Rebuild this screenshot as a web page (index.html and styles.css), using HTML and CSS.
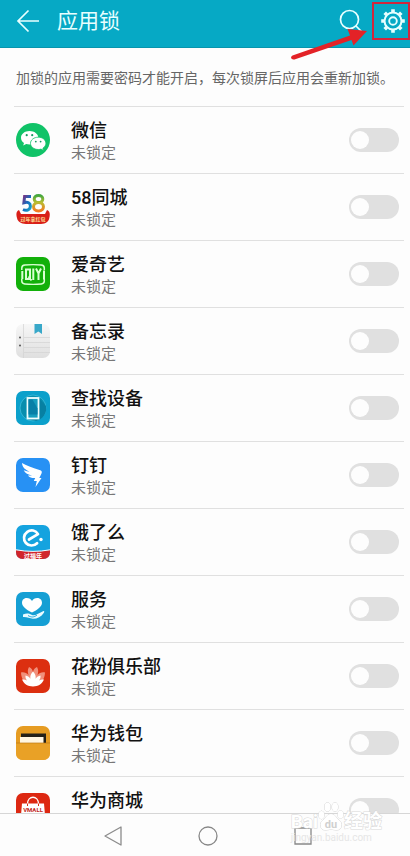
FILE: index.html
```html
<!DOCTYPE html>
<html lang="zh-CN">
<head>
  <meta charset="UTF-8" />
  <meta name="viewport" content="width=device-width, initial-scale=1.0"/>
  <title>应用锁</title>
  <link rel="stylesheet" href="styles.css">
</head>
<body>
  <header class="topbar">
    <button class="icon-btn" aria-label="返回">
      <svg width="24" height="24" viewBox="0 0 24 24" fill="none" stroke="#e8ffff" stroke-width="1.7">
        <path d="M23 12H2M12.500 1.500L2 12l10.500 10.500"/>
      </svg>
    </button>
    <h1>应用锁</h1>
    <button class="icon-btn" aria-label="搜索">
      <svg width="24" height="24" viewBox="0 0 24 24" fill="none" stroke="#e8ffff" stroke-width="1.7">
        <circle cx="10.500" cy="10.500" r="9"/>
        <path d="M17 17l6 6"/>
      </svg>
    </button>
    <button class="icon-btn settings" aria-label="设置">
      <svg width="24" height="24" viewBox="0 0 24 24" fill="none" stroke="#e8ffff">
        <circle cx="12" cy="12" r="8.500" stroke-width="2"/>
        <circle cx="12" cy="12" r="3.800" stroke-width="1.900"/>
        <path stroke-width="3.600" d="M12 .2v3M12 20.800v3M.2 12h3M20.800 12h3M3.700 3.700l2 2M18.300 18.300l2 2M3.700 20.300l2-2M18.300 5.700l2-2"/>
      </svg>
    </button>
  </header>

  <main class="content">
    <p class="hint">加锁的应用需要密码才能开启，每次锁屏后应用会重新加锁。</p>

    <ul class="app-list">
      <li>
        <label class="app-row">
          <svg class="app-icon" viewBox="0 0 34 34">
            <circle cx="17" cy="17" r="17" fill="#10c368"/>
            <path fill="#fff" d="M13.500 8C8.800 8 5 10.900 5 14.700c0 2.100 1.100 3.900 3 5.200l-.8 2.600 3-1.500c1.100.3 2.200.4 3.300.4 4.900 0 8.800-2.900 8.800-6.700S18.300 8 13.500 8z"/>
            <path fill="#fff" stroke="#10c368" stroke-width=".8" d="M22.300 14.200c-4.400 0-7.800 2.700-7.800 6.100s3.400 6.200 7.800 6.200c1 0 1.900-.1 2.700-.4l2.600 1.300-.7-2.200c1.900-1.200 3-2.900 3-4.900 0-3.400-3.300-6.100-7.600-6.100z"/>
            <g fill="#159b60"><circle cx="10.700" cy="12.200" r="1.100"/><circle cx="16.200" cy="12.200" r="1.100"/><circle cx="19.800" cy="18.600" r=".9"/><circle cx="24.600" cy="18.600" r=".9"/></g>
          </svg>
          <span class="app-text"><span class="name">微信</span><span class="state">未锁定</span></span>
          <input type="checkbox" class="switch">
        </label>
      </li>
      <li>
        <label class="app-row">
          <svg class="app-icon" viewBox="0 0 34 34">
            <defs>
              <linearGradient id="eight" x1="0" y1="0" x2="0" y2="1">
                <stop offset="0" stop-color="#45a83f"/><stop offset=".45" stop-color="#b8bd32"/><stop offset="1" stop-color="#f47b22"/>
              </linearGradient>
              <linearGradient id="five" x1="0" y1="0" x2="1" y2="1">
                <stop offset="0" stop-color="#7a3383"/><stop offset=".5" stop-color="#156cc0"/><stop offset="1" stop-color="#19a7c7"/>
              </linearGradient>
            </defs>
            <path fill="#d91f18" d="M3 20C0 21 0 25 1 28c.8 4 4 5.500 9 6h15c5-.5 7.500-2 8.300-6 .9-4 .7-7-2.300-8l-2 4H5z"/>
            <path fill="none" stroke="url(#five)" stroke-width="3" d="M15 6.500H8.600l-.7 6.200c3.800-1.200 6.500.2 6.500 3.300 0 3.800-3.700 5.200-7.400 3.500"/>
            <path fill="none" stroke="url(#eight)" stroke-width="3" d="M22.500 5.500c5.700 0 5.700 7 0 7s-5.700-7 0-7zM22.500 12.500c6.600 0 6.600 8.500 0 8.500s-6.600-8.500 0-8.500z"/>
            <text x="17" y="31" class="mark mark-gold">过年拿红包</text>
          </svg>
          <span class="app-text"><span class="name">58同城</span><span class="state">未锁定</span></span>
          <input type="checkbox" class="switch">
        </label>
      </li>
      <li>
        <label class="app-row">
          <svg class="app-icon" viewBox="0 0 34 34">
            <rect width="34" height="34" rx="7" fill="#12b00a"/>
            <path fill="none" stroke="#d9ffd2" stroke-width="1.500" d="M5.800 13V11c0-2 1-2.800 3-3 5.500-.5 11-.5 16.500 0 2 .2 3 1 3 3v2M5.800 22v2c0 2 1 2.800 3 3 5.500.5 11 .5 16.500 0 2-.2 3-1 3-3v-2"/>
            <path fill="none" stroke="#d9ffd2" stroke-width="2" d="M6.300 14v8M10 12.500h4v9.500h-4zM12.500 19.500l3 4M17.300 11.500V23M20 11.500l2.500 5 2.500-5M22.500 16v7M28 13.500v9"/>
          </svg>
          <span class="app-text"><span class="name">爱奇艺</span><span class="state">未锁定</span></span>
          <input type="checkbox" class="switch">
        </label>
      </li>
      <li>
        <label class="app-row">
          <svg class="app-icon" viewBox="0 0 34 34">
            <defs>
              <linearGradient id="paper" x1="0" y1="0" x2="0" y2="1">
                <stop offset="0" stop-color="#f7f7f7"/><stop offset="1" stop-color="#dfdfdf"/>
              </linearGradient>
            </defs>
            <rect width="34" height="34" rx="7" fill="url(#paper)"/>
            <path stroke="#d3d3d3" stroke-width=".7" d="M7.500 0v34M8 13.500h26M8 18.500h26M8 23.500h26M8 28.500h26"/>
            <path fill="#38a8c9" d="M18.500 0H26v10l-3.700-2.500L18.500 10z"/>
            <circle cx="4" cy="13.500" r=".9" fill="#444"/><circle cx="4" cy="21.500" r=".9" fill="#444"/>
          </svg>
          <span class="app-text"><span class="name">备忘录</span><span class="state">未锁定</span></span>
          <input type="checkbox" class="switch">
        </label>
      </li>
      <li>
        <label class="app-row">
          <svg class="app-icon" viewBox="0 0 34 34">
            <rect width="34" height="34" rx="7" fill="#0ba0cb"/>
            <circle cx="17" cy="17" r="13" fill="#088eae" stroke="#3fbcdc" stroke-width=".8"/>
            <path fill="#0780a2" d="M23 7l7 8a13 13 0 01-10 15l-9-3z"/>
            <rect x="11.500" y="7" width="11" height="20.500" fill="#169dbe" stroke="#f2ffff" stroke-width="1.800"/>
            <path fill="#087fa7" d="M12.500 8.500h4l5 9v6h-9z"/>
          </svg>
          <span class="app-text"><span class="name">查找设备</span><span class="state">未锁定</span></span>
          <input type="checkbox" class="switch">
        </label>
      </li>
      <li>
        <label class="app-row">
          <svg class="app-icon" viewBox="0 0 34 34">
            <rect width="34" height="34" rx="7" fill="#2791f4"/>
            <path fill="#fff" d="M6 5c4 2.500 10 4.700 17.500 7 2.200.7 2.800 1.700 2 3.600L23.300 20h2.200L19.500 29l1.300-6h-3l1.400-3c-3 .2-5.500-.5-7.300-2.500 1.800.2 3.300.1 4.300-.1-4-.6-7.200-2.300-8.500-5.100 2.200.9 4.300 1.300 6 1.300C9.600 12 6.200 9.500 6 5z"/>
          </svg>
          <span class="app-text"><span class="name">钉钉</span><span class="state">未锁定</span></span>
          <input type="checkbox" class="switch">
        </label>
      </li>
      <li>
        <label class="app-row">
          <svg class="app-icon" viewBox="0 0 34 34">
            <rect width="34" height="34" rx="7" fill="#15a3df"/>
            <path fill="#d1252b" d="M0 25q17 3.200 34 0v2q0 7-7 7H7q-7 0-7-7z"/>
            <path fill="none" stroke="#fff" stroke-width="1" d="M0 24.800q17 3.200 34 0"/>
            <path fill="none" stroke="#fff" stroke-width="2.700" stroke-linecap="round" stroke-linejoin="round" d="M13 14.500l9-5.300c-2.200-4.100-7.100-5-10.700-2.400-3.900 2.800-4.300 8-1.400 11.200 2.900 3.300 8 3.300 11.200.2"/>
            <circle cx="25" cy="14.500" r="1.700" fill="#fff"/>
            <text x="17" y="32.500" class="mark">过福年</text>
          </svg>
          <span class="app-text"><span class="name">饿了么</span><span class="state">未锁定</span></span>
          <input type="checkbox" class="switch">
        </label>
      </li>
      <li>
        <label class="app-row">
          <svg class="app-icon" viewBox="0 0 34 34">
            <rect width="34" height="34" rx="7" fill="#159fd4"/>
            <path fill="#fff" d="M16 20.500C10.500 18 6 14.500 6 10.800 6 7.500 8.300 6 10.800 6c2.300 0 4.200 1 5.200 3 1-2 2.900-3 5.200-3C23.700 6 26 7.500 26 10.800c0 3.700-4.500 7.200-10 9.700z"/>
            <path fill="#e9fbff" d="M7 22.500c3.500-1.800 6-1.200 8.500.2 2 .9 4 .5 5.500-.5l6-3c1.300-.5 1.700.4.9 1.500-2.700 4-6.400 6-10.900 6-3.500-.3-6-2-10-1.700z"/>
            <path fill="none" stroke="#159fd4" stroke-width=".9" d="M12 23.500c3 2 6 2 9-.5"/>
          </svg>
          <span class="app-text"><span class="name">服务</span><span class="state">未锁定</span></span>
          <input type="checkbox" class="switch">
        </label>
      </li>
      <li>
        <label class="app-row">
          <svg class="app-icon" viewBox="0 0 34 34">
            <rect width="34" height="34" rx="7" fill="#dc2f10"/>
            <path fill="#f0907c" d="M13 8c2.500 1 4 3 4 6 0-3 1.500-5 4-6 1.500 2.500 1.500 5 .5 8 2-2.300 4.500-3 7.500-2.500-.2 7-4 12-12 12.500-8-.5-11.800-5.500-12-12.500 3-.5 5.500.2 7.500 2.500-1-3-1-5.500.5-8z"/>
            <path fill="#fff" d="M17 12.500c2.300 2.200 3 4.700 2.600 7.200 1.200-1.800 2.900-2.800 4.900-3.200.2 2-.3 3.500-1.500 5 1.600-.9 3.200-1.200 5-.9-2 4.500-5.700 6.900-11 6.900s-9-2.400-11-6.900c1.800-.3 3.400 0 5 .9-1.200-1.500-1.700-3-1.500-5 2 .4 3.700 1.400 4.900 3.200-.4-2.500.3-5 2.600-7.200z"/>
          </svg>
          <span class="app-text"><span class="name">花粉俱乐部</span><span class="state">未锁定</span></span>
          <input type="checkbox" class="switch">
        </label>
      </li>
      <li>
        <label class="app-row">
          <svg class="app-icon" viewBox="0 0 34 34">
            <rect width="34" height="34" rx="7" fill="#e69c22"/>
            <path fill="#242018" d="M5 7.500h25V17H5z"/>
            <path fill="#fff6e2" d="M4 11h23.500v6H4z"/>
            <path fill="#e9a126" d="M0 17h34V27q0 7-7 7H7q-7 0-7-7z"/>
            <path stroke="#bd7a16" stroke-width=".7" d="M0 17h34"/>
          </svg>
          <span class="app-text"><span class="name">华为钱包</span><span class="state">未锁定</span></span>
          <input type="checkbox" class="switch">
        </label>
      </li>
      <li>
        <label class="app-row">
          <svg class="app-icon" viewBox="0 0 34 34">
            <rect width="34" height="34" rx="7" fill="#dd2812"/>
            <path fill="#fff" d="M6 10.500h22L30 34H4z"/>
            <path fill="none" stroke="#fff" stroke-width="1.300" d="M11.500 11c0-9 11-9 11 0"/>
            <path fill="none" stroke="#dd2812" stroke-width="1" d="M11.500 10.500V13M22.500 10.500V13"/>
            <text x="17" y="19" class="mark mark-mall">VMALL</text>
          </svg>
          <span class="app-text"><span class="name">华为商城</span><span class="state">未锁定</span></span>
          <input type="checkbox" class="switch">
        </label>
      </li>
    </ul>
  </main>

  <nav class="navbar">
    <button class="icon-btn" aria-label="后退">
      <svg width="20" height="22" viewBox="0 0 20 22" fill="none" stroke="#8c8c8c" stroke-width="1.300" stroke-linejoin="round"><path d="M18 2v18L2 11z"/></svg>
    </button>
    <button class="icon-btn" aria-label="主屏幕">
      <svg width="20" height="22" viewBox="0 0 20 22" fill="none" stroke="#888" stroke-width="1.300"><circle cx="10" cy="11" r="9"/></svg>
    </button>
    <button class="icon-btn" aria-label="最近任务">
      <svg width="20" height="22" viewBox="0 0 20 22" fill="none" stroke="#888" stroke-width="1.300"><path d="M2 3h16v16H2z"/></svg>
    </button>
  </nav>

  <!-- arrow pointing at the settings button -->
  <svg class="arrow" width="80" height="34" viewBox="0 0 80 34">
    <path fill="#e32227" d="M1.500 27.500L59 7.500 56.500 1 76 3 62.500 17.500 60.500 12 3.500 31.500Q.5 32 0 29.800 0 28.300 1.500 27.500z"/>
  </svg>

  <div class="watermark">
    <div class="brand">
      <span>Bai</span>
      <svg width="26" height="30" viewBox="0 0 26 30" fill="#fff" stroke="#d4d4d4">
        <ellipse cx="3.500" cy="13" rx="2.800" ry="4"/><ellipse cx="9.500" cy="5" rx="3" ry="4.200"/><ellipse cx="17" cy="5" rx="3" ry="4.200"/><ellipse cx="22.500" cy="12.500" rx="2.800" ry="4"/>
        <path d="M13 12c4 0 5 4 8 6 4 3 3 10-2 10-3 0-4-.6-6-.6s-3 .6-6 .6c-5 0-6-7-2-10 3-2 4-6 8-6z"/>
        <text x="13" y="26" class="du">du</text>
      </svg>
      <span>经验</span>
    </div>
    <div class="site">jingyan.baidu.com</div>
  </div>
</body>
</html>
```
FILE: styles.css
```css
* {
  box-sizing: border-box;
}

body {
  margin: 0;
  height: 100vh;
  display: flex;
  flex-direction: column;
  position: relative;
  overflow: hidden;
  font-family: Roboto, "Noto Sans CJK SC", sans-serif;
  background: #fdfdfd;
  color: #111;
}

.topbar {
  display: flex;
  align-items: center;
  flex: none;
  height: 48px;
  padding: 0 0 6px 16px;
  background: #06a9c5;
  border-bottom: 1px solid #0795ad;
}

.topbar h1 {
  flex: 1;
  margin: 0 0 0 17px;
  font-size: 21px;
  line-height: 32px;
  font-weight: 400;
  color: #e8ffff;
}

.icon-btn {
  display: flex;
  align-items: center;
  justify-content: center;
  padding: 0;
  border: none;
  background: none;
  cursor: pointer;
}

.settings {
  width: 38px;
  height: 38px;
  margin-left: 9px;
  padding-left: 4px;
  border: 2px solid #d2263c;
}

.content {
  flex: 1;
  min-height: 0;
  overflow-y: auto;
  scrollbar-width: none;
}

.hint {
  margin: 0;
  padding: 20px 14px 18px 16px;
  font-size: 14px;
  line-height: 20px;
  color: #666;
  white-space: nowrap;
}

.app-list {
  margin: 0;
  padding: 0 6px 0 14px;
  list-style: none;
}

.app-list li {
  border-top: 1px solid #e0e0e0;
}

.app-row {
  display: flex;
  align-items: center;
  height: 66px;
  padding: 0 5px 0 2px;
}

.app-icon {
  flex: none;
  width: 34px;
  height: 34px;
}

.app-text {
  flex: 1;
  display: flex;
  flex-direction: column;
  padding-top: 4px;
  margin-left: 21px;
}

.name {
  font-size: 18px;
  line-height: 23px;
  font-weight: 500;
}

.state {
  font-size: 15px;
  line-height: 23px;
  color: #777;
}

.switch {
  appearance: none;
  display: flex;
  align-items: center;
  width: 50px;
  height: 24px;
  margin: 0;
  padding: 0 2px;
  border-radius: 12px;
  background: #e0e0e0;
}

.switch::before {
  content: "";
  width: 18px;
  height: 18px;
  border-radius: 50%;
  background: #fdfdfd;
}

.switch:checked {
  justify-content: flex-end;
  background: #06a9c5;
}

.mark {
  font-family: "Noto Sans CJK SC", sans-serif;
  font-size: 6px;
  font-weight: 700;
  fill: #fff;
  text-anchor: middle;
}

.mark-gold {
  font-size: 5px;
  fill: #ffe29a;
}

.mark-mall {
  font-family: Roboto, sans-serif;
  fill: #c3271a;
}

.navbar {
  display: flex;
  align-items: center;
  justify-content: center;
  gap: 75px;
  flex: none;
  height: 43px;
  padding: 4px 0 2px 6px;
  border-top: 1px solid #d6d6d6;
}

.arrow {
  position: absolute;
  top: 28px;
  right: 39px;
}

.watermark {
  position: absolute;
  right: 28px;
  bottom: 12px;
  color: #fff;
  -webkit-text-stroke: 1px #d8d8d8;
  paint-order: stroke;
  pointer-events: none;
}

.brand {
  display: flex;
  align-items: flex-end;
  font-size: 19px;
  line-height: 20px;
  font-weight: 700;
}

.du {
  font-size: 11px;
  font-weight: 700;
  text-anchor: middle;
  stroke: none;
  fill: #d0d0d0;
}

.site {
  font-size: 10px;
  line-height: 12px;
  color: #e6e6e6;
  -webkit-text-stroke: 0;
}
```
